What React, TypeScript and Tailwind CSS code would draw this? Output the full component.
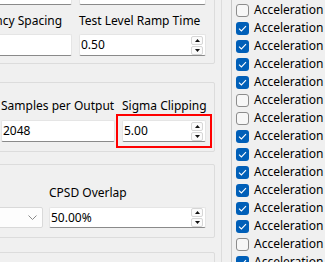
import React from "react";

function Spin() {
  return (
    <div className="flex flex-col gap-[1px] mr-[2px] shrink-0">
      <div className="w-[12px] h-[9px] border border-[#d6d6d6] rounded-[2px] bg-[#fbfbfb] flex items-center justify-center">
        <svg width="5" height="3" viewBox="0 0 5 3">
          <path d="M2.5 0L5 3H0z" fill="#111" />
        </svg>
      </div>
      <div className="w-[12px] h-[9px] border border-[#d6d6d6] rounded-[2px] bg-[#fbfbfb] flex items-center justify-center">
        <svg width="5" height="3" viewBox="0 0 5 3">
          <path d="M0 0H5L2.5 3z" fill="#111" />
        </svg>
      </div>
    </div>
  );
}

function Field({ value, spin, h = "h-[22px]" }: { value?: string; spin?: boolean; h?: string }) {
  return (
    <div
      className={`${h} bg-white border border-[#e5e5e5] border-b-[#8a8a8a] rounded-[2px] flex items-center pl-[1px]`}
    >
      <span className="flex-1 leading-[16px]">{value}</span>
      {spin && <Spin />}
    </div>
  );
}

function Label({ children }: { children?: React.ReactNode }) {
  return <div className="h-[16px] leading-[16px] whitespace-nowrap">{children}</div>;
}

function AccRow({ checked }: { checked: boolean }) {
  return (
    <div className="h-[18px] flex items-center pl-[4px]">
      {checked ? (
        <div className="w-[13px] h-[13px] rounded-[3px] bg-[#005fb8] flex items-center justify-center shrink-0">
          <svg width="9" height="7" viewBox="0 0 9 7">
            <path d="M1 3.6L3.4 6L8 1.2" fill="none" stroke="#fff" strokeWidth="1.1" />
          </svg>
        </div>
      ) : (
        <div className="w-[13px] h-[13px] rounded-[3px] bg-[#f7f7f7] border border-[#8c8c8c] shrink-0" />
      )}
      <span className="ml-[5px] whitespace-nowrap leading-[16px]">Acceleration</span>
    </div>
  );
}

const checks = [false, true, true, true, true, false, false, true, true, true, true, true, true, false, true];

export default function App() {
  return (
    <div className="w-[325px] h-[262px] overflow-hidden bg-[#f0f0f0] flex text-[12px] text-black font-['Noto_Sans',sans-serif]">
      <div className="w-[222px] shrink-0 border-r border-[#dcdcdc] overflow-hidden">
        <div className="flex flex-col -mt-[28px]">
          {/* group box 1 */}
          <div className="-ml-[60px] w-[275px] border border-[#dcdcdc] rounded-[2px] pt-[10px] pb-[7px] pr-[8px] flex flex-col items-end">
            <div className="flex gap-[7px]">
              <div className="w-[116px]"><Field /></div>
              <div className="w-[127px]"><Field /></div>
            </div>
            <div className="flex gap-[7px] mt-[8px]">
              <div className="w-[116px] flex flex-col gap-[5px]">
                <Label>Frequency Spacing</Label>
                <Field />
              </div>
              <div className="w-[127px] flex flex-col gap-[5px]">
                <Label>Test Level Ramp Time</Label>
                <Field value="0.50" spin />
              </div>
            </div>
          </div>

          {/* group box 2 */}
          <div className="mt-[18px] -ml-[60px] w-[275px] border border-[#dcdcdc] rounded-[2px] pt-[15px] pb-[9px] pr-[8px] flex justify-end gap-[7px]">
            <div className="w-[114px] flex flex-col gap-[6px]">
              <Label>Samples per Output</Label>
              <Field value="2048" />
            </div>
            <div className="w-[84px] flex flex-col gap-[6px]">
              <Label>Sigma Clipping</Label>
              <div className="relative">
                <Field value="5.00" spin />
                <div className="absolute -left-[6px] -right-[6px] -top-[6px] -bottom-[6px] border-2 border-[#ff0000]" />
              </div>
            </div>
          </div>

          {/* group box 3 */}
          <div className="mt-[12px] -ml-[60px] w-[275px] border border-[#dcdcdc] rounded-[2px] pt-[20px] pb-[9px] pr-[8px] flex justify-end items-end gap-[6px]">
            <div className="w-[60px]">
              <div className="h-[21px] bg-[#fdfdfd] border border-[#d9d9d9] rounded-[2px] flex items-center justify-end pr-[5px]">
                <svg width="9" height="5" viewBox="0 0 9 5">
                  <path d="M0.5 0.5L4.5 4.5L8.5 0.5" fill="none" stroke="#8a8a8a" strokeWidth="1" />
                </svg>
              </div>
            </div>
            <div className="w-[157px] flex flex-col gap-[6px]">
              <Label>CPSD Overlap</Label>
              <Field value="50.00%" spin h="h-[21px]" />
            </div>
          </div>

          {/* group box 4 */}
          <div className="mt-[14px] -ml-[60px] w-[275px] h-[60px] border border-[#dcdcdc] rounded-[2px]" />
        </div>
      </div>

      <div className="ml-[9px] flex-1 border-l border-[#c8c8c8] overflow-hidden">
        <div className="flex flex-col mt-[1px]">
          {checks.map((c, i) => (
            <AccRow key={i} checked={c} />
          ))}
        </div>
      </div>
    </div>
  );
}
